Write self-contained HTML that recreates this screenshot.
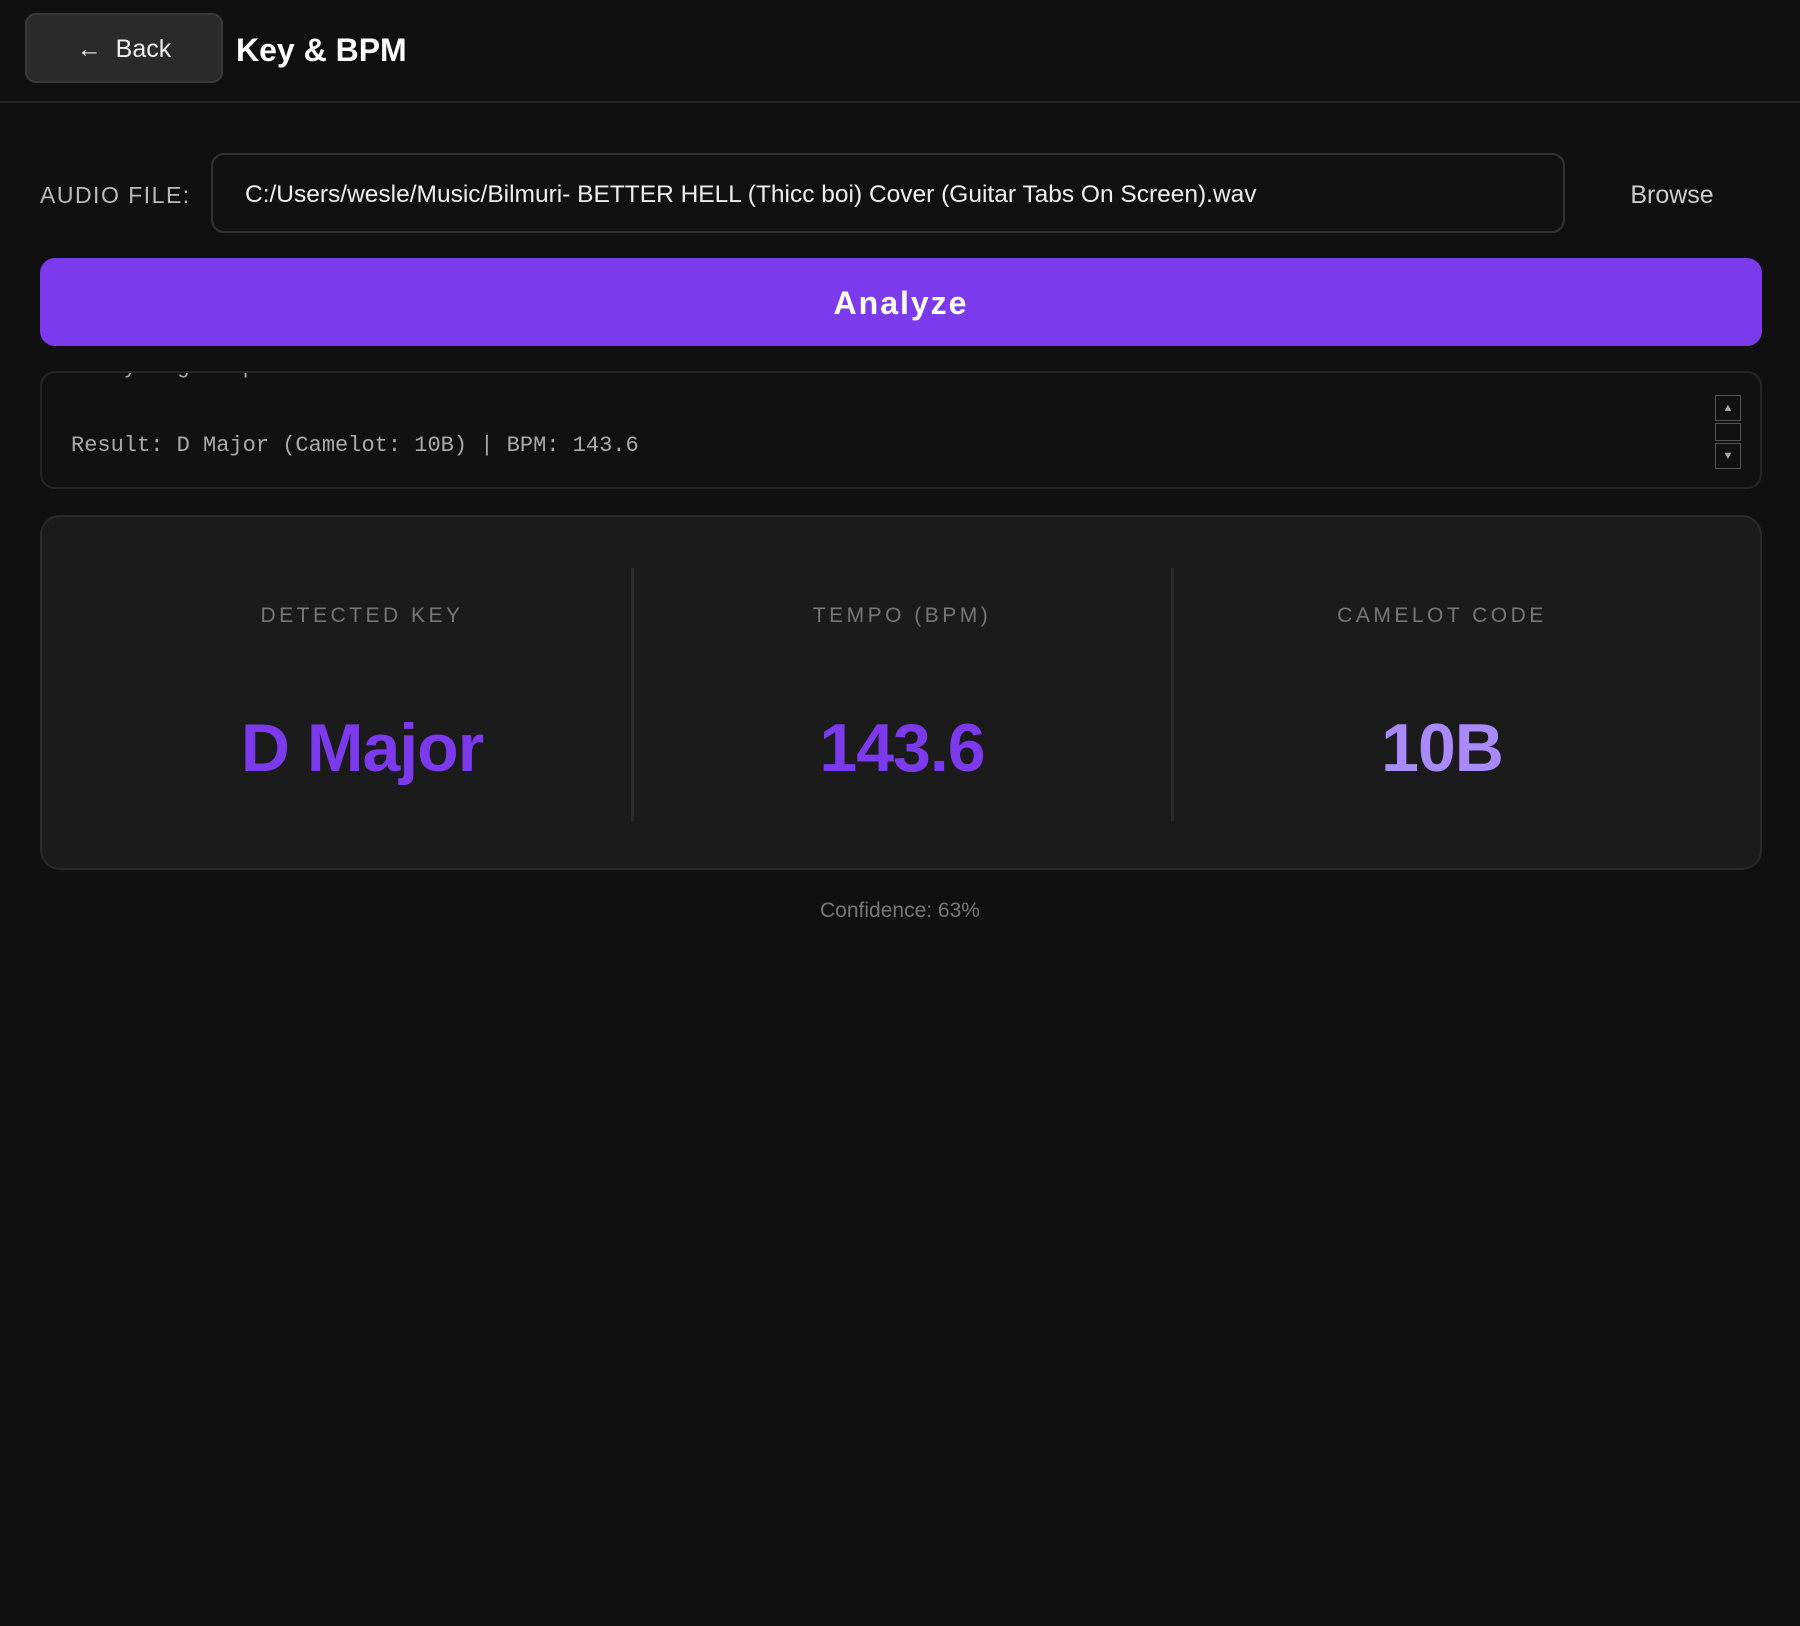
<!DOCTYPE html>
<html><head><meta charset="utf-8"><style>
*{box-sizing:border-box;margin:0;padding:0}
html,body{width:1800px;height:1626px;background:#101010;overflow:hidden;font-family:"Liberation Sans",sans-serif}
.hdr{position:absolute;left:0;top:0;width:1800px;height:103px;border-bottom:2px solid #262626}
.back{position:absolute;left:25px;top:13px;width:198px;height:70px;background:#2a2a2a;border:2px solid #3a3a3a;border-radius:11px;color:#eee;font-size:25px;display:flex;align-items:center;justify-content:center;padding-top:3px}
.title{position:absolute;left:236px;top:32px;color:#fff;font-size:32px;font-weight:bold}
.lbl{position:absolute;left:40px;top:182px;color:#bbb;font-size:23px;letter-spacing:1.5px}
.inp{position:absolute;left:211px;top:153px;width:1354px;height:80px;border:2px solid #333;border-radius:13px;background:#111;color:#eee;font-size:24.5px;padding-left:32px;line-height:80px;white-space:nowrap}
.browse{position:absolute;left:1600px;top:181px;width:144px;text-align:center;color:#ccc;font-size:25px}
.an{position:absolute;left:40px;top:258px;width:1722px;height:88px;background:#7c3aed;border-radius:15px;color:#fff;font-size:32px;font-weight:bold;letter-spacing:2px;text-align:center;line-height:90px}
.log{position:absolute;left:40px;top:371px;width:1722px;height:118px;border:2px solid #262626;border-radius:15px;background:#111;overflow:hidden}
.log pre{position:absolute;left:29px;font-family:"Liberation Mono",monospace;font-size:22px;color:#aaa}
.sb{position:absolute;left:1673px;width:26px;border:1px solid #555;background:#111}
.card{position:absolute;left:40px;top:515px;width:1722px;height:355px;background:#1b1b1b;border:2px solid #2a2a2a;border-radius:20px}
.div{position:absolute;top:51px;width:3px;height:253px;background:#2a2a2a}
.col{position:absolute;top:0;width:540px;text-align:center}
.cl{position:absolute;top:87px;width:100%;color:#777;font-size:21px;letter-spacing:3.5px}
.cv{position:absolute;top:192px;width:100%;font-size:68px;font-weight:bold;color:#7c3aed;letter-spacing:-1px}
.conf{position:absolute;top:899px;left:0;width:1800px;text-align:center;color:#777;font-size:21px}
</style></head><body>
<div class="hdr"><div class="back">←&nbsp; Back</div><div class="title">Key &amp; BPM</div></div>
<div class="lbl">AUDIO FILE:</div>
<div class="inp">C:/Users/wesle/Music/Bilmuri- BETTER HELL (Thicc boi) Cover (Guitar Tabs On Screen).wav</div>
<div class="browse">Browse</div>
<div class="an">Analyze</div>
<div class="log">
<pre style="top:-18px">Analyzing tempo...</pre>
<pre style="top:60px">Result: D Major (Camelot: 10B) | BPM: 143.6</pre>
<div class="sb" style="top:22px;height:26px;color:#aaa;font-size:11px;text-align:center;line-height:24px">▲</div>
<div class="sb" style="top:50px;height:18px"></div>
<div class="sb" style="top:70px;height:26px;color:#aaa;font-size:11px;text-align:center;line-height:24px">▼</div>
</div>
<div class="card">
<div class="div" style="left:589px"></div>
<div class="div" style="left:1129px"></div>
<div class="col" style="left:50px"><div class="cl">DETECTED KEY</div><div class="cv">D Major</div></div>
<div class="col" style="left:590px"><div class="cl">TEMPO (BPM)</div><div class="cv">143.6</div></div>
<div class="col" style="left:1130px"><div class="cl">CAMELOT CODE</div><div class="cv" style="color:#a78bfa">10B</div></div>
</div>
<div class="conf">Confidence: 63%</div>
</body></html>
